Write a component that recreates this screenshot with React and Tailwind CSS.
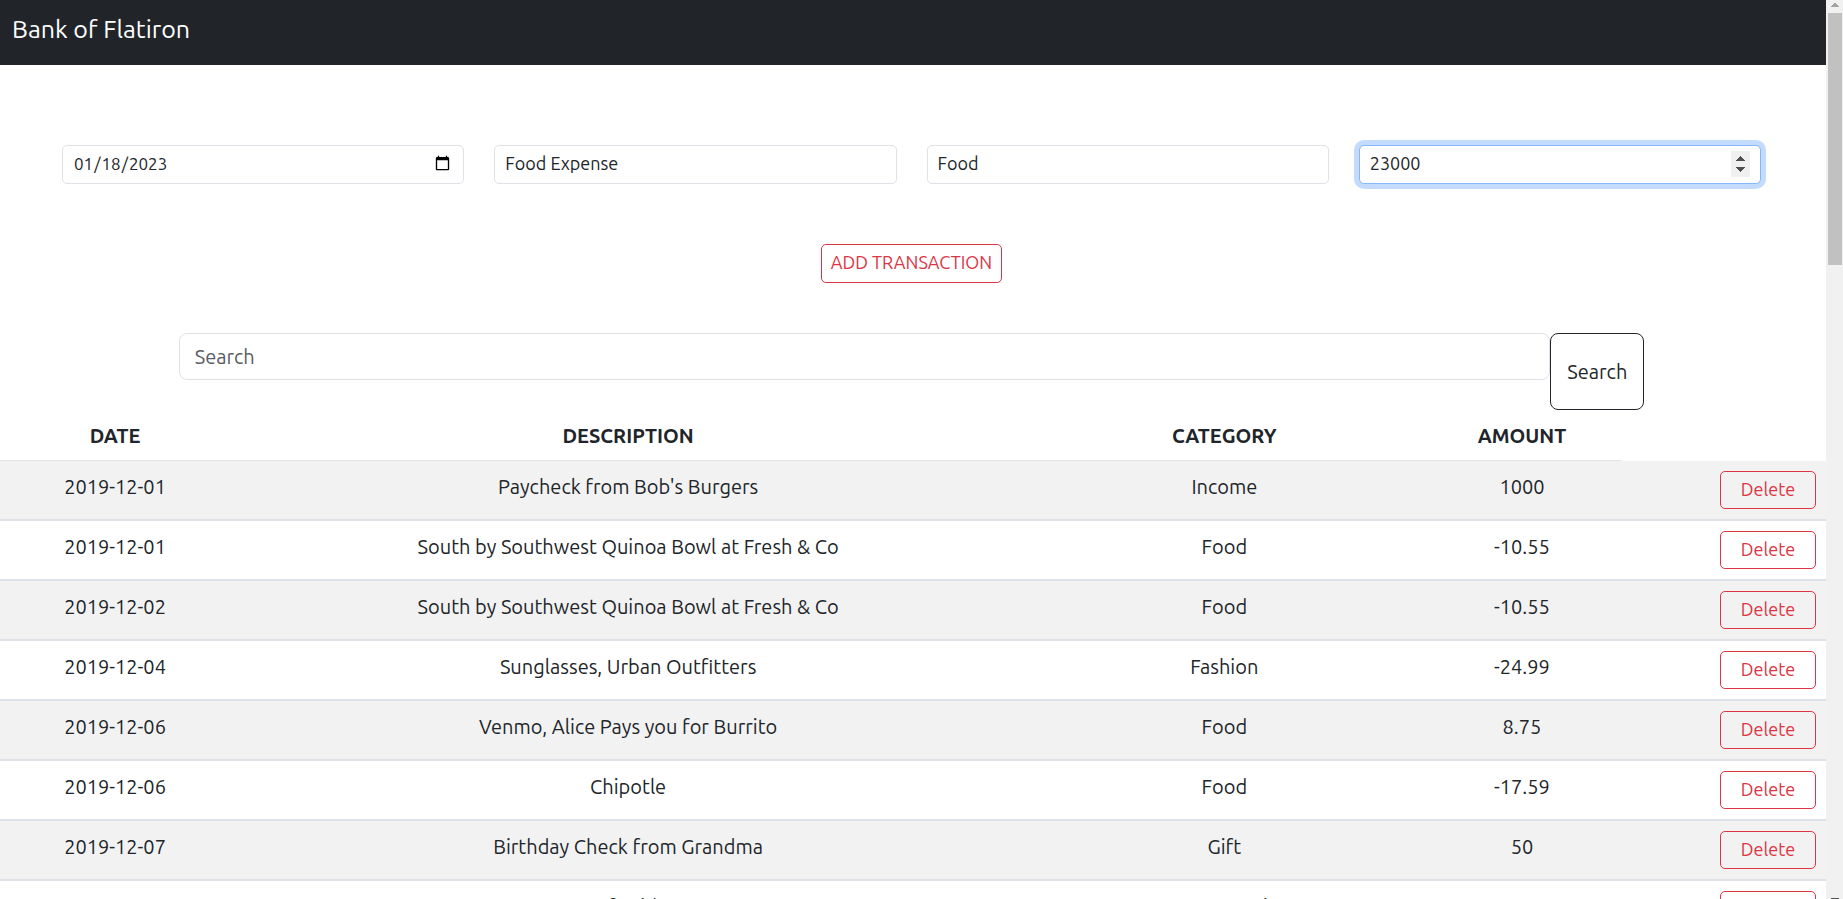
const transactions = [
  { id: 1, date: "2019-12-01", description: "Paycheck from Bob's Burgers", category: "Income", amount: "1000" },
  { id: 2, date: "2019-12-01", description: "South by Southwest Quinoa Bowl at Fresh & Co", category: "Food", amount: "-10.55" },
  { id: 3, date: "2019-12-02", description: "South by Southwest Quinoa Bowl at Fresh & Co", category: "Food", amount: "-10.55" },
  { id: 4, date: "2019-12-04", description: "Sunglasses, Urban Outfitters", category: "Fashion", amount: "-24.99" },
  { id: 5, date: "2019-12-06", description: "Venmo, Alice Pays you for Burrito", category: "Food", amount: "8.75" },
  { id: 6, date: "2019-12-06", description: "Chipotle", category: "Food", amount: "-17.59" },
  { id: 7, date: "2019-12-07", description: "Birthday Check from Grandma", category: "Gift", amount: "50" },
  { id: 8, date: "2019-12-09", description: "Lyft Ride", category: "Transportation", amount: "-13.25" },
];

const field =
  "block w-full min-w-0 rounded-[5px] border border-[#dee2e6] bg-white px-[10px] leading-[27px] h-[39px] text-[#212529] outline-none focus:border-[#86b7fe] focus:ring-[5px] focus:ring-[#c2dbfe]";

function AmountField() {
  return (
    <div className="relative">
      <input
        aria-label="Amount"
        type="number"
        defaultValue="23000"
        autoFocus
        className={`${field} pt-[3px] pb-[7px] text-[18px] caret-transparent [&::-webkit-inner-spin-button]:appearance-none`}
      />
      <svg
        aria-hidden="true"
        width="19"
        height="26"
        viewBox="0 0 19 26"
        shapeRendering="crispEdges"
        className="pointer-events-none absolute top-[6px] right-[11px]"
      >
        <rect width="19" height="26" fill="#f0f0f0" />
        <path
          d="M9 5h1v1h1v1h1v1h1v1h1v1H5V9h1V8h1V7h1V6h1zM5 16h9v1h-1v1h-1v1h-1v1h-1v1H9v-1H8v-1H7v-1H6v-1H5z"
          fill="#505050"
        />
      </svg>
    </div>
  );
}

function TransactionForm() {
  return (
    <form className="pt-20" onSubmit={(e) => e.preventDefault()}>
      <div className="grid grid-cols-4 gap-[30px] px-[62px]">
        <input aria-label="Date" type="date" defaultValue="2023-01-18" className={`${field} pt-1 pb-[6px] text-[17px]`} />
        <input aria-label="Description" type="text" defaultValue="Food Expense" className={`${field} pt-[3px] pb-[7px] text-[18px]`} />
        <input aria-label="Category" type="text" defaultValue="Food" className={`${field} pt-[3px] pb-[7px] text-[18px]`} />
        <AmountField />
      </div>
      <div className="mt-15 flex justify-center">
        <button
          type="submit"
          className="rounded-[5px] border border-[#dc3545] px-[9px] pt-1 pb-[6px] text-[18px] leading-[27px] text-[#dc3545]"
        >
          ADD TRANSACTION
        </button>
      </div>
    </form>
  );
}

function SearchBar() {
  return (
    <form role="search" className="mx-auto mt-[50px] flex w-[80.4%] items-start" onSubmit={(e) => e.preventDefault()}>
      <input
        type="search"
        aria-label="Search"
        placeholder="Search"
        className="min-w-0 flex-1 rounded-[8px] border border-[#dee2e6] px-[15px] py-2 text-[20px] leading-[29px] text-[#212529] outline-none placeholder:text-[#595c5f]"
      />
      <button
        type="submit"
        className="rounded-[8px] border border-[#212529] px-4 py-[23px] text-[20px] leading-[29px] text-[#212529]"
      >
        Search
      </button>
    </form>
  );
}

function TransactionTable() {
  return (
    <table className="w-full table-fixed border-separate border-spacing-0 text-center text-[20px] leading-[30px]">
      <colgroup>
        <col className="w-[12.6%]" />
        <col className="w-[43.6%]" />
        <col className="w-[21.7%]" />
        <col className="w-[10.9%]" />
        <col />
      </colgroup>
      <thead>
        <tr>
          {["DATE", "DESCRIPTION", "CATEGORY", "AMOUNT"].map((h) => (
            <th key={h} scope="col" className="border-b border-[#dee2e6] px-[10px] pt-[11px] pb-[9px] font-bold">
              {h}
            </th>
          ))}
        </tr>
      </thead>
      <tbody>
        {transactions.map((t) => (
          <tr key={t.id} className="align-top odd:bg-[#f2f2f2] [&>td]:border-b-2 [&>td]:border-[#dee2e6]">
            <td className="px-[10px] pt-[11px] pb-[9px]">{t.date}</td>
            <td className="px-[10px] pt-[11px] pb-[9px]">{t.description}</td>
            <td className="px-[10px] pt-[11px] pb-[9px]">{t.category}</td>
            <td className="px-[10px] pt-[11px] pb-[9px]">{t.amount}</td>
            <td className="p-[10px]">
              <button
                type="button"
                aria-label={`Delete ${t.description}`}
                className="ml-auto block w-24 rounded-[5px] border border-[#dc3545] pt-1 pb-[6px] text-[18px] leading-[26px] text-[#dc3545]"
              >
                Delete
              </button>
            </td>
          </tr>
        ))}
      </tbody>
    </table>
  );
}

function ScrollTrack() {
  return (
    <div aria-hidden="true" className="flex w-[17px] shrink-0 flex-col items-center bg-[#f1f1f1]">
      <svg width="8" height="4" viewBox="0 0 8 4" className="mt-[3px] shrink-0" shapeRendering="crispEdges">
        <path d="M3 0h2v1h1v1h1v1h1v1H0V3h1V2h1V1h1z" fill="#a3a3a3" />
      </svg>
      <div className="mt-[6px] h-[28%] w-[14px] bg-[#c1c1c1]" />
      <div className="mt-auto h-px w-2 bg-[#505050]" />
    </div>
  );
}

export default function App() {
  return (
    <div className="flex h-screen overflow-hidden bg-white font-['Ubuntu','Noto_Sans',sans-serif] text-[#212529]">
      <div className="min-w-0 flex-1 overflow-hidden">
        <header className="bg-[#212529] px-3 pt-[10px] pb-[17px]">
          <h1 className="text-[25px] leading-[38px] text-white">Bank of Flatiron</h1>
        </header>
        <main>
          <div className="pr-[3px]">
            <TransactionForm />
            <SearchBar />
          </div>
          <TransactionTable />
        </main>
      </div>
      <ScrollTrack />
    </div>
  );
}
